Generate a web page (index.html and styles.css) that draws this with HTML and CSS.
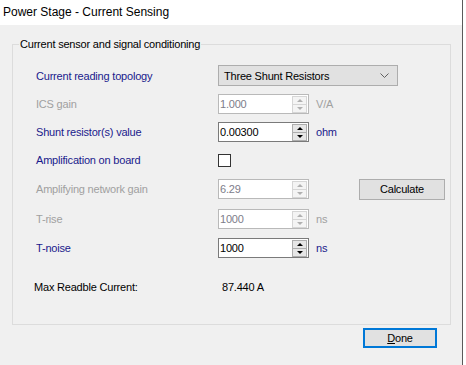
FILE: index.html
```html
<!DOCTYPE html>
<html lang="en">
<head>
    <meta charset="UTF-8">
    <meta name="viewport" content="width=device-width, initial-scale=1.0">
    <title>Power Stage - Current Sensing</title>
    <link rel="stylesheet" href="styles.css">
</head>
<body>
    <div class="window">
        <div class="titlebar">Power Stage - Current Sensing</div>

        <fieldset class="group">
            <legend>Current sensor and signal conditioning</legend>

            <div class="row first">
                <span class="lbl">Current reading topology</span>
                <div class="select">
                    <span>Three Shunt Resistors</span>
                    <svg width="9" height="6" viewBox="0 0 9 6"><path d="M0.5 0.5 L4.5 4.5 L8.5 0.5" fill="none" stroke="#606060" stroke-width="1"/></svg>
                </div>
            </div>

            <div class="row">
                <span class="lbl off">ICS gain</span>
                <div class="spin off">
                    <span class="val">1.000</span>
                    <span class="arrows"><i class="up"></i><i class="down"></i></span>
                </div>
                <span class="unit off">V/A</span>
            </div>

            <div class="row">
                <span class="lbl">Shunt resistor(s) value</span>
                <div class="spin">
                    <span class="val">0.00300</span>
                    <span class="arrows"><i class="up"></i><i class="down"></i></span>
                </div>
                <span class="unit">ohm</span>
            </div>

            <div class="row">
                <span class="lbl">Amplification on board</span>
                <span class="check"></span>
            </div>

            <div class="row tall">
                <span class="lbl off">Amplifying network gain</span>
                <div class="spin off">
                    <span class="val">6.29</span>
                    <span class="arrows"><i class="up"></i><i class="down"></i></span>
                </div>
                <span></span>
                <button class="btn calc">Calculate</button>
            </div>

            <div class="row tall">
                <span class="lbl off">T-rise</span>
                <div class="spin off">
                    <span class="val">1000</span>
                    <span class="arrows"><i class="up"></i><i class="down"></i></span>
                </div>
                <span class="unit off">ns</span>
            </div>

            <div class="row">
                <span class="lbl">T-noise</span>
                <div class="spin">
                    <span class="val">1000</span>
                    <span class="arrows"><i class="up"></i><i class="down"></i></span>
                </div>
                <span class="unit">ns</span>
            </div>

            <div class="row result">
                <span class="lbl plain">Max Readble Current:</span>
                <span class="reading">87.440 A</span>
            </div>
        </fieldset>

        <div class="footer">
            <button class="btn done"><u>D</u>one</button>
        </div>
    </div>
</body>
</html>
```

FILE: styles.css
```css
body {
    margin: 0;
    background-color: #ffffff;
    font-family: "Liberation Sans", Arial, sans-serif;
    font-size: 11px;
    letter-spacing: -0.2px;
    color: #000000;
}
.window {
    width: 462px;
    height: 365px;
    background-color: #f0f0f0;
    border-right: 1px solid #5a5a5a;
}
.titlebar {
    height: 25px;
    line-height: 24px;
    padding-left: 3px;
    background-color: #ffffff;
    font-family: "Liberation Sans", Arial, sans-serif;
    font-size: 12px;
    letter-spacing: 0;
}
.group {
    box-sizing: border-box;
    height: 289px;
    width: 439px;
    margin: 11px 0 0 12px;
    padding: 9px 0 0 23px;
    border: 1px solid #dcdcdc;
}
.group legend {
    padding: 0 1px;
    margin-left: -17px;
    line-height: 16px;
}
.row {
    display: grid;
    grid-template-columns: 182px 98px 43px 86px;
    align-items: center;
    height: 28px;
}
.row.first {
    height: 29px;
}
.row.tall {
    height: 30px;
}
.row.result {
    height: 50px;
}
.lbl {
    color: #1a1a8c;
}
.lbl.off, .unit.off {
    color: #a0a0a0;
}
.lbl.plain {
    color: #000000;
    margin-left: -2px;
}
.unit {
    color: #1a1a8c;
}
.reading {
    padding-left: 4px;
}
.select {
    grid-column: 2 / span 3;
    box-sizing: border-box;
    width: 180px;
    height: 21px;
    display: flex;
    align-items: center;
    justify-content: space-between;
    padding: 0 8px 0 5px;
    background-color: #e1e1e1;
    border: 1px solid #adadad;
}
.spin {
    box-sizing: border-box;
    width: 91px;
    height: 20px;
    display: flex;
    align-items: center;
    background-color: #ffffff;
    border: 1px solid #7a7a7a;
}
.spin.off {
    border-color: #b9b9b9;
}
.spin .val {
    flex: 1;
    padding-left: 1px;
}
.spin.off .val {
    color: #7d7d8a;
}
.arrows {
    box-sizing: border-box;
    width: 15px;
    height: 17px;
    margin-right: 1px;
    display: flex;
    flex-direction: column;
    border: 1px solid #adadad;
    background-color: #e6e6e6;
}
.spin.off .arrows {
    border-color: #d6d6d6;
    background-color: #f4f4f4;
}
.arrows i {
    flex: 1;
    display: flex;
    align-items: center;
    justify-content: center;
}
.arrows i + i {
    border-top: 1px solid #adadad;
}
.spin.off .arrows i + i {
    border-top-color: #d6d6d6;
}
.arrows i::after {
    content: "";
    border-left: 3px solid transparent;
    border-right: 3px solid transparent;
}
.arrows .up::after {
    border-bottom: 3px solid #000000;
}
.arrows .down::after {
    border-top: 3px solid #000000;
}
.spin.off .arrows .up::after {
    border-bottom-color: #b0b0b0;
}
.spin.off .arrows .down::after {
    border-top-color: #b0b0b0;
}
.check {
    box-sizing: border-box;
    width: 13px;
    height: 13px;
    background-color: #ffffff;
    border: 1px solid #333333;
}
.btn {
    box-sizing: border-box;
    height: 21px;
    padding: 0;
    font-family: "Liberation Sans", Arial, sans-serif;
    font-size: 11px;
    letter-spacing: -0.2px;
    color: #000000;
    background-color: #e1e1e1;
    border: 1px solid #adadad;
}
.calc {
    width: 86px;
}
.footer {
    display: flex;
    justify-content: flex-end;
    padding: 3px 25px 0 0;
}
.done {
    width: 74px;
    height: 20px;
    border: 2px solid #0078d7;
}
```
